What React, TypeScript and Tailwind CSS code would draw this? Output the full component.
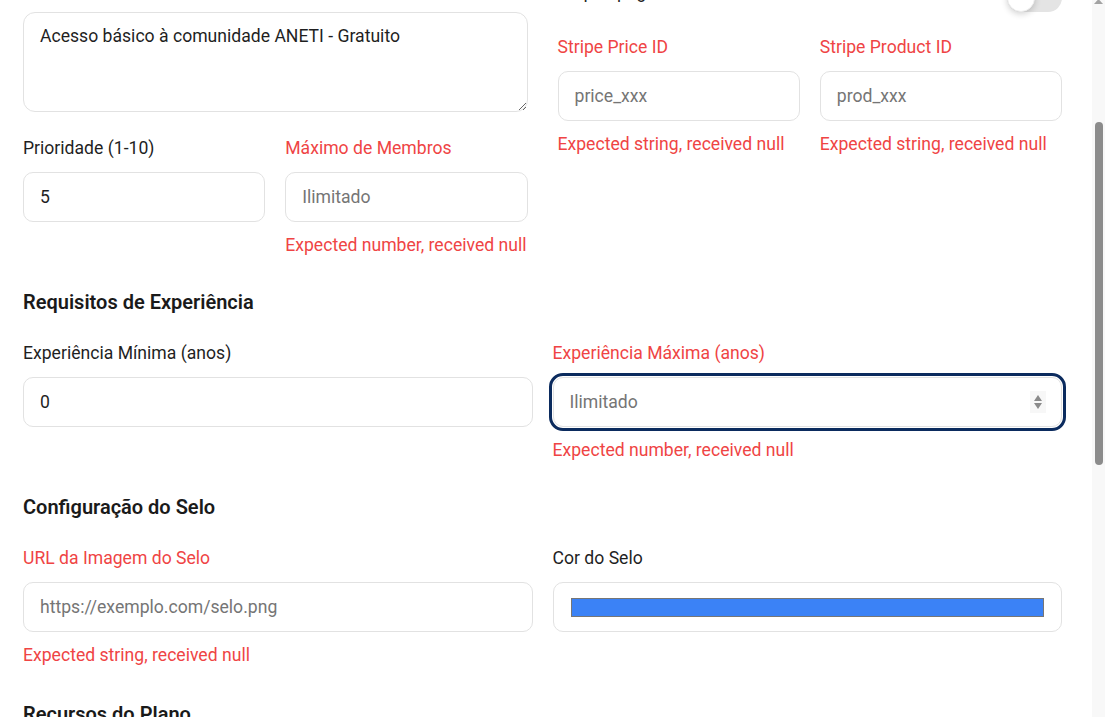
import type { ReactNode } from 'react'

/* form field bits */
const Label = ({ children, error }: { children: ReactNode; error?: boolean }) => (
  <label className={`mb-[11px] block text-[17.6px] leading-[26px] ${error ? 'text-[#ef4444]' : 'text-[#1f1f1f]'}`}>
    {children}
  </label>
)

const Err = ({ children }: { children: ReactNode }) => (
  <p className="mt-[10px] text-[17.6px] leading-[26px] text-[#ef4444]">{children}</p>
)

const Box = ({ value, placeholder }: { value?: string; placeholder?: string }) => (
  <div className="flex h-[50px] items-center rounded-[10px] border border-[#e2e2e2] bg-white px-4 text-[17.6px]">
    {value ? (
      <span className="text-[#1f1f1f]">{value}</span>
    ) : (
      <span className="text-[#757575]">{placeholder}</span>
    )}
  </div>
)

const Heading = ({ children }: { children: ReactNode }) => (
  <h3 className="mb-6 text-[20px] leading-7 font-semibold text-[#1a1a1a]">{children}</h3>
)

export default function App() {
  return (
    <div className="flex h-[717px] w-[1105px] overflow-hidden bg-white font-['Roboto',sans-serif]">
      <div className="flex-1 overflow-hidden pl-[23px] pr-[30px]">
        <div className="-mt-[25px]">
          {/* top: description + stripe */}
          <div className="grid grid-cols-2 items-start gap-x-[30px]">
            <div>
              <Label>Descrição</Label>
              <textarea
                readOnly
                defaultValue="Acesso básico à comunidade ANETI - Gratuito"
                className="block h-[100px] w-full resize-y rounded-xl border border-[#e2e2e2] px-4 py-[10px] text-[17.6px] leading-[26px] text-[#1f1f1f] outline-none"
              />
              <div className="mt-[23px] grid grid-cols-2 gap-x-5">
                <div>
                  <Label>Prioridade (1-10)</Label>
                  <Box value="5" />
                </div>
                <div>
                  <Label error>Máximo de Membros</Label>
                  <Box placeholder="Ilimitado" />
                  <Err>Expected number, received null</Err>
                </div>
              </div>
            </div>

            <div className="mt-[4px]">
              <div className="flex items-start justify-between">
                <span className="text-[17.6px] leading-[26px] text-[#1f1f1f]">Requer pagamento</span>
                <div className="mt-[5px] flex h-7 w-[55px] items-center rounded-full bg-[#e4e4e4]">
                  <span className="h-7 w-7 rounded-full border border-[#eeeeee] bg-white shadow-[0_2px_6px_rgba(0,0,0,0.18)]" />
                </div>
              </div>
              <div className="mt-[22px] grid grid-cols-2 gap-x-5">
                <div>
                  <Label error>Stripe Price ID</Label>
                  <Box placeholder="price_xxx" />
                  <Err>Expected string, received null</Err>
                </div>
                <div>
                  <Label error>Stripe Product ID</Label>
                  <Box placeholder="prod_xxx" />
                  <Err>Expected string, received null</Err>
                </div>
              </div>
            </div>
          </div>

          {/* experience */}
          <section className="mt-[30px]">
            <Heading>Requisitos de Experiência</Heading>
            <div className="grid grid-cols-2 gap-x-5">
              <div>
                <Label>Experiência Mínima (anos)</Label>
                <Box value="0" />
              </div>
              <div>
                <Label error>Experiência Máxima (anos)</Label>
                <div className="relative rounded-[10px] outline-[3px] outline-offset-[1px] outline-[#0b2b5e] outline-solid">
                  <Box placeholder="Ilimitado" />
                  <div className="absolute top-[14px] right-[16px] flex h-[22px] w-[16px] items-center justify-center bg-[#f7f7f7]">
                    <svg width="10" height="16" viewBox="0 0 10 16">
                      <path d="M5 1 L9 7 L1 7 Z" fill="#8a8a8a" />
                      <path d="M1 9 L9 9 L5 15 Z" fill="#8a8a8a" />
                    </svg>
                  </div>
                </div>
                <Err>Expected number, received null</Err>
              </div>
            </div>
          </section>

          {/* badge */}
          <section className="mt-[30px]">
            <Heading>Configuração do Selo</Heading>
            <div className="grid grid-cols-2 gap-x-5">
              <div>
                <Label error>URL da Imagem do Selo</Label>
                <Box placeholder="https://exemplo.com/selo.png" />
                <Err>Expected string, received null</Err>
              </div>
              <div>
                <Label>Cor do Selo</Label>
                <div className="flex h-[50px] items-center rounded-[10px] border border-[#e2e2e2] px-[17px]">
                  <div className="h-[19px] w-full border border-[#767676] bg-[#3b82f6]" />
                </div>
              </div>
            </div>
          </section>

          <section className="mt-[32px]">
            <Heading>Recursos do Plano</Heading>
          </section>
        </div>
      </div>

      {/* scrollbar */}
      <div className="flex w-[13px] flex-col items-center bg-[#f8f8f8]">
        <svg width="9" height="5" viewBox="0 0 9 5" className="-mt-[1px]">
          <path d="M0 5 L4.5 0 L9 5 Z" fill="#a3a3a3" />
        </svg>
        <div className="mt-[118px] h-[343px] w-[8px] rounded-[4px] bg-[#8c8c8c]" />
      </div>
    </div>
  )
}
